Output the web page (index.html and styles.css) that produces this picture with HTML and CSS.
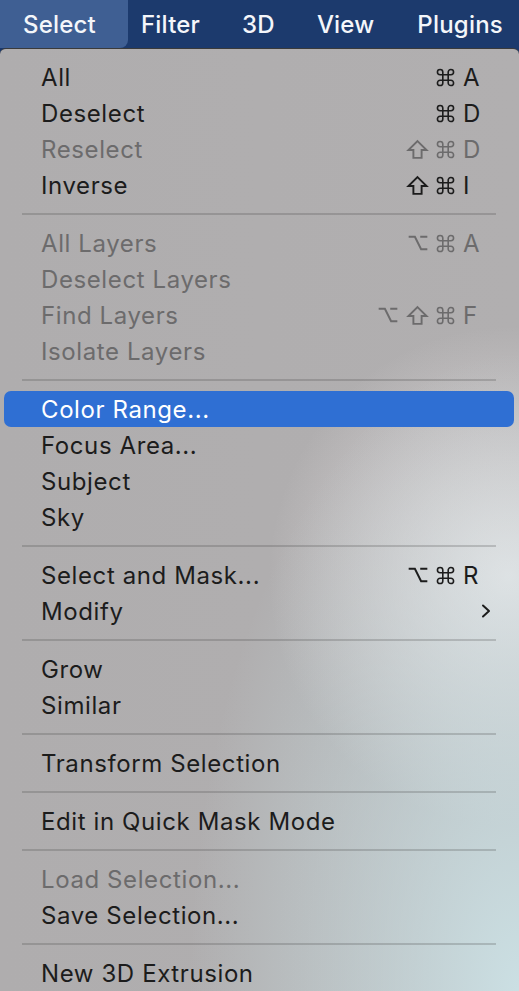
FILE: index.html
```html
<!DOCTYPE html>
<html>
<head>
<meta charset="utf-8">
<link rel="stylesheet" href="styles.css">
</head>
<body>
<svg class="defs" width="0" height="0" aria-hidden="true">
  <defs>
    <symbol id="cmd" viewBox="0 0 24 24"><path d="M8.6 8.6 V5.2 A3.4 3.4 0 1 0 5.2 8.6 H18.8 A3.4 3.4 0 1 0 15.4 5.2 V18.8 A3.4 3.4 0 1 0 18.8 15.4 H5.2 A3.4 3.4 0 1 0 8.6 18.8 Z" fill="none" stroke="currentColor" stroke-width="2" stroke-linejoin="round"/></symbol>
    <symbol id="shift" viewBox="0 0 24 22"><path d="M12 2.2 L21.5 11.6 H16.3 V19.8 H7.7 V11.6 H2.5 Z" fill="none" stroke="currentColor" stroke-width="2" stroke-linejoin="miter"/></symbol>
    <symbol id="opt" viewBox="0 0 24 18"><path d="M1.5 2 H8.5 L15.5 16 H22.5 M14.5 2 H22.5" fill="none" stroke="currentColor" stroke-width="2.2"/></symbol>
  </defs>
</svg>
<div class="menubar">
  <div class="mb-item active">Select</div>
  <div class="mb-item">Filter</div>
  <div class="mb-item">3D</div>
  <div class="mb-item">View</div>
  <div class="mb-item">Plugins</div>
</div>
<div class="menu">
  <div class="item"><span>All</span><span class="sc"><span class="mods"><svg class="g-cmd"><use href="#cmd"/></svg></span><span class="key">A</span></span></div>
  <div class="item"><span>Deselect</span><span class="sc"><span class="mods"><svg class="g-cmd"><use href="#cmd"/></svg></span><span class="key">D</span></span></div>
  <div class="item dis"><span>Reselect</span><span class="sc"><span class="mods"><svg class="g-shift"><use href="#shift"/></svg><svg class="g-cmd"><use href="#cmd"/></svg></span><span class="key">D</span></span></div>
  <div class="item"><span>Inverse</span><span class="sc"><span class="mods"><svg class="g-shift"><use href="#shift"/></svg><svg class="g-cmd"><use href="#cmd"/></svg></span><span class="key">I</span></span></div>
  <div class="sep"></div>
  <div class="item dis"><span>All Layers</span><span class="sc"><span class="mods"><svg class="g-opt"><use href="#opt"/></svg><svg class="g-cmd"><use href="#cmd"/></svg></span><span class="key">A</span></span></div>
  <div class="item dis"><span>Deselect Layers</span></div>
  <div class="item dis"><span>Find Layers</span><span class="sc"><span class="mods"><svg class="g-opt"><use href="#opt"/></svg><svg class="g-shift"><use href="#shift"/></svg><svg class="g-cmd"><use href="#cmd"/></svg></span><span class="key">F</span></span></div>
  <div class="item dis"><span>Isolate Layers</span></div>
  <div class="sep"></div>
  <div class="item hl"><span>Color Range...</span></div>
  <div class="item"><span>Focus Area...</span></div>
  <div class="item"><span>Subject</span></div>
  <div class="item"><span>Sky</span></div>
  <div class="sep"></div>
  <div class="item"><span>Select and Mask...</span><span class="sc"><span class="mods"><svg class="g-opt"><use href="#opt"/></svg><svg class="g-cmd"><use href="#cmd"/></svg></span><span class="key">R</span></span></div>
  <div class="item"><span>Modify</span><span class="arrow"><svg width="10" height="14" viewBox="0 0 10 14"><path d="M2 1.5 L8 7 L2 12.5" fill="none" stroke="currentColor" stroke-width="2" stroke-linecap="round" stroke-linejoin="round"/></svg></span></div>
  <div class="sep"></div>
  <div class="item"><span>Grow</span></div>
  <div class="item"><span>Similar</span></div>
  <div class="sep"></div>
  <div class="item"><span>Transform Selection</span></div>
  <div class="sep"></div>
  <div class="item"><span>Edit in Quick Mask Mode</span></div>
  <div class="sep"></div>
  <div class="item dis"><span>Load Selection...</span></div>
  <div class="item"><span>Save Selection...</span></div>
  <div class="sep"></div>
  <div class="item"><span>New 3D Extrusion</span></div>
</div>
</body>
</html>
```

FILE: styles.css
```css
html, body {
  margin: 0;
  padding: 0;
}
body {
  width: 519px;
  height: 991px;
  overflow: hidden;
  background: #1b396c;
  font-family: "Inter", "DejaVu Sans", sans-serif;
}
.defs {
  position: absolute;
  width: 0;
  height: 0;
}
.menubar {
  height: 48px;
  display: flex;
  align-items: stretch;
  background: #1c3a6d;
  color: #f4f6fa;
  font-size: 24px;
  font-weight: 500;
  letter-spacing: 0.2px;
  overflow: hidden;
}
.mb-item {
  flex-shrink: 0;
  display: flex;
  align-items: center;
  white-space: nowrap;
}
.mb-item.active {
  width: 128px;
  box-sizing: border-box;
  padding-left: 23px;
  background: #3f5f93;
  border-bottom-right-radius: 8px;
}
.mb-item:nth-child(2) { padding-left: 13px; }
.mb-item:nth-child(3) { padding-left: 42px; }
.mb-item:nth-child(4) { padding-left: 42px; }
.mb-item:nth-child(5) { padding-left: 43px; }
.menu {
  height: 943px;
  box-sizing: border-box;
  border-top: 1px solid #3a3a3a;
  border-top-left-radius: 6px;
  border-top-right-radius: 6px;
  padding: 10px 0 0 0;
  background:
    radial-gradient(ellipse 330px 640px at 100% 100%, rgba(204,225,229,0.97), rgba(204,225,229,0) 100%),
    radial-gradient(ellipse 240px 250px at 98% 56%, rgba(233,229,230,0.95), rgba(233,229,230,0) 100%),
    linear-gradient(90deg, #afadae 0%, #b1afb0 100%);
  color: #1c1c1c;
  font-size: 24px;
  letter-spacing: 0.6px;
}
.item {
  height: 36px;
  display: flex;
  align-items: center;
  justify-content: space-between;
  margin: 0 5px 0 4px;
  padding: 0 31px 0 37px;
  border-radius: 7px;
}
.item.dis { color: #6c6b6c; }
.item.hl {
  background: #2f6fd3;
  color: #ffffff;
}
.sc {
  display: flex;
  align-items: center;
  gap: 8px;
}
.mods {
  display: flex;
  align-items: center;
  gap: 7px;
}
.key {
  width: 20px;
  font-size: 24px;
  letter-spacing: 0;
}
.g-cmd { width: 19px; height: 19px; }
.g-shift { width: 23px; height: 21px; }
.g-opt { width: 22px; height: 16px; }
.arrow {
  display: flex;
  align-items: center;
  margin-right: -8px;
}
.sep {
  height: 2px;
  margin: 10px 23px 10px 22px;
  background: rgba(60,60,60,0.22);
}
```
